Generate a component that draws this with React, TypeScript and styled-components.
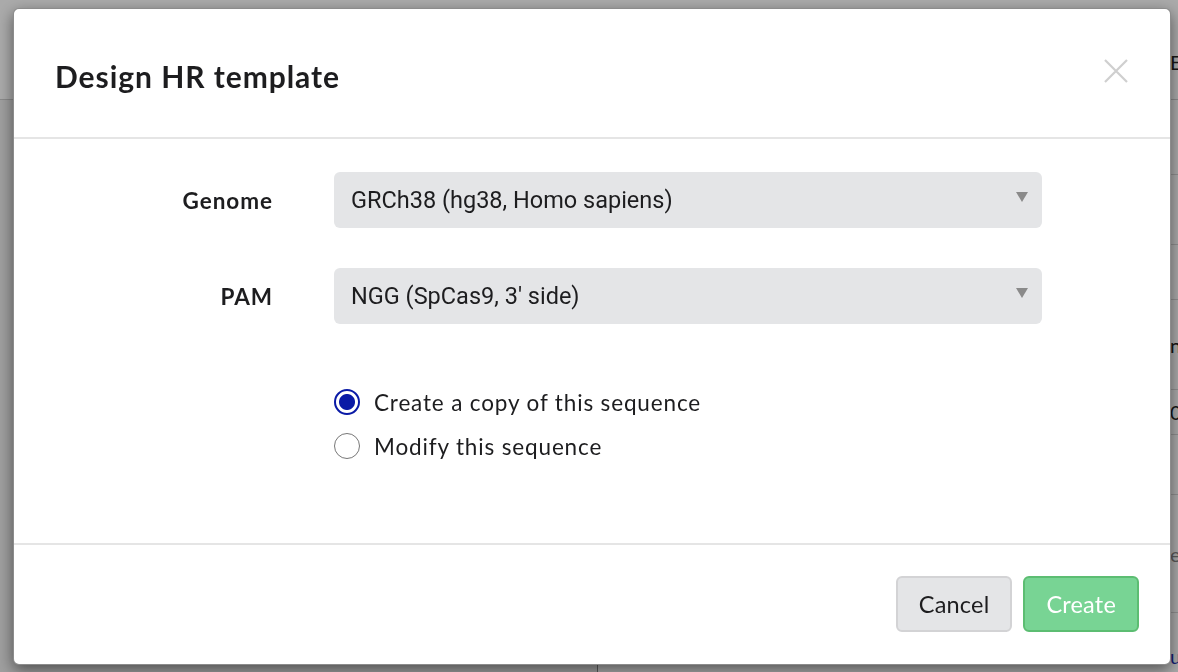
import React, { useState } from 'react'
import styled, { createGlobalStyle } from 'styled-components'

const GlobalStyle = createGlobalStyle`
  html, body {
    margin: 0;
    padding: 0;
    width: 100%;
    height: 100%;
    overflow: hidden;
  }

  body {
    font-family: Lato, 'Open Sans', 'Liberation Sans', sans-serif;
    color: #222;
    background: #eeeeee;
  }

  * {
    box-sizing: border-box;
  }
`

// page under the dialog, mostly hidden
const PageStyled = styled.div`
  display: grid;
  grid-template-columns: 597px 1fr;
  grid-template-rows: 100px 1fr;

  width: 1178px;
  height: 672px;

  background: #eeeeee;
`

const TopBarStyled = styled.div`
  grid-column: 1 / 3;

  display: flex;
  align-items: flex-start;

  padding: 50px 0 0 1170px;

  white-space: nowrap;
  overflow: hidden;

  font-size: 20px;
  color: #222;

  background: #fff;
  border-bottom: 1px solid #cfcfcf;
`

const SidePanelStyled = styled.div`
  background: #eeeeee;
`

const TablePanelStyled = styled.div`
  display: flex;
  flex-direction: column;

  background: #fff;
  border-left: 1px solid #888;
`

const TableRowStyled = styled.div<{ $height: number; $tone?: string }>`
  display: flex;
  flex-shrink: 0;
  align-items: center;

  height: ${({ $height }) => $height}px;
  padding-left: 572px;

  white-space: nowrap;
  overflow: hidden;

  font-size: 20px;
  color: ${({ $tone }) => $tone || '#222'};

  border-bottom: 1px solid #d8d8d8;
`

const OverlayStyled = styled.div`
  position: fixed;
  inset: 0;

  display: flex;

  padding: 8px 7px 7px 13px;

  background: rgba(0, 0, 0, 0.335);
`

const ModalStyled = styled.div`
  display: flex;
  flex: 1;
  flex-direction: column;

  background: #fff;
  border: 1px solid rgba(0, 0, 0, 0.45);
  border-radius: 6px;
  box-shadow: 0 5px 15px rgba(0, 0, 0, 0.5);
`

const ModalHeaderStyled = styled.div`
  display: flex;
  align-items: center;
  justify-content: space-between;

  height: 130px;
  padding: 6px 41px 0 41px;

  border-bottom: 2px solid #e5e5e5;
`

const TitleStyled = styled.h4`
  margin: 0;

  font-size: 30px;
  font-weight: 700;
  color: #1d1d1f;
  letter-spacing: 0.95px;
`

const CloseButtonStyled = styled.button`
  display: flex;

  margin-top: -10px;
  padding: 0;

  cursor: pointer;

  background: 0;
  border: 0;

  & svg {
    width: 26px;
    height: 26px;

    stroke: #cfcfcf;
  }
`

const ModalBodyStyled = styled.div`
  flex: 1;

  padding: 33px 0 0 0;

  border-bottom: 2px solid #e5e5e5;
`

const FormGridStyled = styled.div`
  display: grid;
  grid-template-columns: 259px 708px;
  column-gap: 61px;
  row-gap: 40px;
  align-items: center;
`

const LabelStyled = styled.label`
  justify-self: end;

  font-size: 22.5px;
  font-weight: 700;
  color: #1d1d1f;
  letter-spacing: 0.95px;
`

const SelectBoxStyled = styled.div`
  display: flex;
  align-items: center;
  justify-content: space-between;

  height: 56px;
  padding: 0 14px 0 17px;

  font-family: Roboto, 'Liberation Sans', sans-serif;
  font-size: 23.5px;
  color: #1d1d1f;

  background: #e4e5e7;
  border-radius: 6px;

  & svg {
    width: 12px;
    height: 10px;
    margin-top: -6px;

    fill: #8a8a8a;
  }
`

const RadioGroupStyled = styled.div`
  grid-column: 2;

  display: flex;
  flex-direction: column;

  margin-top: 16px;
`

const RadioRowStyled = styled.label`
  display: flex;
  align-items: center;
  gap: 14px;

  height: 44px;

  font-size: 22.5px;
  color: #1d1d1f;
  letter-spacing: 0.85px;

  cursor: pointer;
`

const RadioDotStyled = styled.span<{ $checked: boolean }>`
  display: inline-block;
  flex-shrink: 0;

  width: 26px;
  height: 26px;

  border-radius: 50%;
  border: ${({ $checked }) =>
    $checked ? '2.5px solid #0a1aa6' : '1.5px solid #777'};
  background: ${({ $checked }) =>
    $checked ? 'radial-gradient(circle, #0a1aa6 0 7.5px, #fff 8.5px)' : '#fff'};
`

const ModalFooterStyled = styled.div`
  display: flex;
  justify-content: flex-end;
  align-items: flex-start;
  gap: 11px;

  height: 119px;
  padding: 31px 31px 0 0;
`

const ButtonStyled = styled.button<{ $primary?: boolean }>`
  height: 56px;
  padding: 0 21px;

  font-family: Lato, 'Open Sans', 'Liberation Sans', sans-serif;
  font-size: 23.5px;
  color: ${({ $primary }) => ($primary ? '#fff' : '#1d1d1f')};
  letter-spacing: 0.2px;

  cursor: pointer;

  background: ${({ $primary }) => ($primary ? '#78d494' : '#e4e5e7')};
  border: 2px solid ${({ $primary }) => ($primary ? '#5cbd72' : '#d3d3d5')};
  border-radius: 6px;
`

const selects = [
  { label: 'Genome', value: 'GRCh38 (hg38, Homo sapiens)' },
  { label: 'PAM', value: "NGG (SpCas9, 3' side)" },
]

const options = ['Create a copy of this sequence', 'Modify this sequence']

const tableRows = [
  { height: 75, text: '' },
  { height: 70, text: '' },
  { height: 55, text: '' },
  { height: 90, text: 'n' },
  { height: 45, text: '0' },
  { height: 60, text: '' },
  { height: 118, text: 'ec', tone: '#888' },
  { height: 86, text: 'ue', tone: '#1f2fb0' },
]

const App = () => {
  const [choice, setChoice] = useState(0)

  return (
    <>
      <GlobalStyle />

      <PageStyled>
        <TopBarStyled>Export</TopBarStyled>
        <SidePanelStyled />
        <TablePanelStyled>
          {tableRows.map((row, i) => (
            <TableRowStyled key={i} $height={row.height} $tone={row.tone}>
              {row.text}
            </TableRowStyled>
          ))}
        </TablePanelStyled>
      </PageStyled>

      <OverlayStyled>
        <ModalStyled role="dialog">
          <ModalHeaderStyled>
            <TitleStyled>Design HR template</TitleStyled>

            <CloseButtonStyled aria-label="Close">
              <svg viewBox="0 0 26 26" fill="none" strokeWidth="2.2">
                <path d="M2 2 24 24M24 2 2 24" />
              </svg>
            </CloseButtonStyled>
          </ModalHeaderStyled>

          <ModalBodyStyled>
            <FormGridStyled>
              {selects.map((item) => (
                <React.Fragment key={item.label}>
                  <LabelStyled>{item.label}</LabelStyled>
                  <SelectBoxStyled>
                    <span>{item.value}</span>
                    <svg viewBox="0 0 12 10">
                      <path d="M0 0h12L6 10Z" />
                    </svg>
                  </SelectBoxStyled>
                </React.Fragment>
              ))}

              <RadioGroupStyled>
                {options.map((text, i) => (
                  <RadioRowStyled key={text} onClick={() => setChoice(i)}>
                    <RadioDotStyled $checked={choice === i} />
                    {text}
                  </RadioRowStyled>
                ))}
              </RadioGroupStyled>
            </FormGridStyled>
          </ModalBodyStyled>

          <ModalFooterStyled>
            <ButtonStyled>Cancel</ButtonStyled>
            <ButtonStyled $primary>Create</ButtonStyled>
          </ModalFooterStyled>
        </ModalStyled>
      </OverlayStyled>
    </>
  )
}

export default App
